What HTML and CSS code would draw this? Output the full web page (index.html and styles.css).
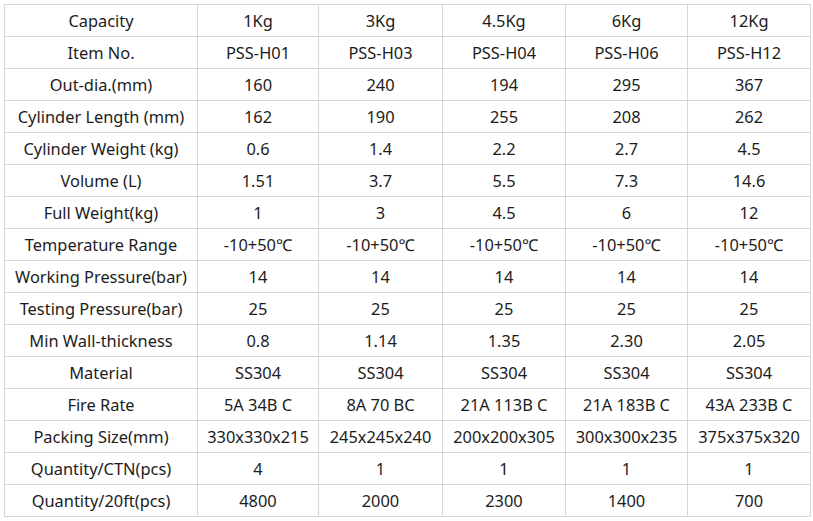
FILE: index.html
```html
<!DOCTYPE html>
<html>
<head>
<meta charset="utf-8">
<link rel="stylesheet" href="styles.css">
</head>
<body>
<div class="spec">
  <div class="c">Capacity</div><div class="c">1Kg</div><div class="c">3Kg</div><div class="c">4.5Kg</div><div class="c">6Kg</div><div class="c">12Kg</div>
  <div class="c">Item No.</div><div class="c">PSS-H01</div><div class="c">PSS-H03</div><div class="c">PSS-H04</div><div class="c">PSS-H06</div><div class="c">PSS-H12</div>
  <div class="c">Out-dia.(mm)</div><div class="c">160</div><div class="c">240</div><div class="c">194</div><div class="c">295</div><div class="c">367</div>
  <div class="c">Cylinder Length (mm)</div><div class="c">162</div><div class="c">190</div><div class="c">255</div><div class="c">208</div><div class="c">262</div>
  <div class="c">Cylinder Weight (kg)</div><div class="c">0.6</div><div class="c">1.4</div><div class="c">2.2</div><div class="c">2.7</div><div class="c">4.5</div>
  <div class="c">Volume (L)</div><div class="c">1.51</div><div class="c">3.7</div><div class="c">5.5</div><div class="c">7.3</div><div class="c">14.6</div>
  <div class="c">Full Weight(kg)</div><div class="c">1</div><div class="c">3</div><div class="c">4.5</div><div class="c">6</div><div class="c">12</div>
  <div class="c">Temperature Range</div><div class="c">-10+50℃</div><div class="c">-10+50℃</div><div class="c">-10+50℃</div><div class="c">-10+50℃</div><div class="c">-10+50℃</div>
  <div class="c">Working Pressure(bar)</div><div class="c">14</div><div class="c">14</div><div class="c">14</div><div class="c">14</div><div class="c">14</div>
  <div class="c">Testing Pressure(bar)</div><div class="c">25</div><div class="c">25</div><div class="c">25</div><div class="c">25</div><div class="c">25</div>
  <div class="c">Min Wall-thickness</div><div class="c">0.8</div><div class="c">1.14</div><div class="c">1.35</div><div class="c">2.30</div><div class="c">2.05</div>
  <div class="c">Material</div><div class="c">SS304</div><div class="c">SS304</div><div class="c">SS304</div><div class="c">SS304</div><div class="c">SS304</div>
  <div class="c">Fire Rate</div><div class="c">5A 34B C</div><div class="c">8A 70 BC</div><div class="c">21A 113B C</div><div class="c">21A 183B C</div><div class="c">43A 233B C</div>
  <div class="c">Packing Size(mm)</div><div class="c">330x330x215</div><div class="c">245x245x240</div><div class="c">200x200x305</div><div class="c">300x300x235</div><div class="c">375x375x320</div>
  <div class="c">Quantity/CTN(pcs)</div><div class="c">4</div><div class="c">1</div><div class="c">1</div><div class="c">1</div><div class="c">1</div>
  <div class="c">Quantity/20ft(pcs)</div><div class="c">4800</div><div class="c">2000</div><div class="c">2300</div><div class="c">1400</div><div class="c">700</div>
</div>
</body>
</html>
```
FILE: styles.css
```css
html, body {
  margin: 0;
  background: #ffffff;
}
body {
  padding: 4px;
  font-family: "Noto Sans", "Open Sans", sans-serif;
  font-size: 16.4px;
  color: #1c1c1c;
}
.spec {
  display: grid;
  grid-template-columns: 192px 120px 123px 122px 121px 122px;
  grid-auto-rows: 31px;
  gap: 1px;
  padding: 1px;
  background: #d6d6d6;
  width: max-content;
}
.c {
  background: #ffffff;
  display: flex;
  align-items: center;
  justify-content: center;
  white-space: nowrap;
  line-height: 1;
  padding-top: 2px;
}
```
